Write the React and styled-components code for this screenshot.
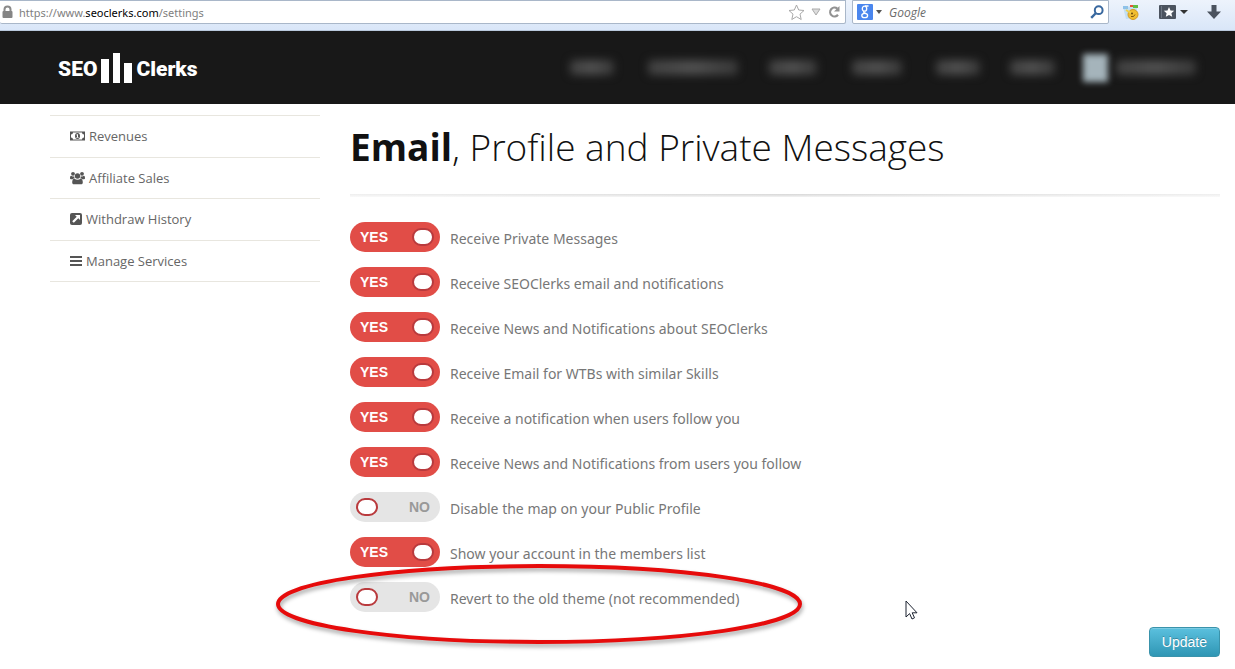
import React, { useState } from "react";
import styled, { createGlobalStyle } from "styled-components";

const GlobalStyle = createGlobalStyle`
  * { box-sizing: border-box; }
  body {
    margin: 0;
    background: #fff;
    color: #777;
    font-family: "Open Sans", sans-serif;
    font-size: 14px;
  }
`;

const Toolbar = styled.div`
  display: flex;
  align-items: flex-start;
  height: 31px;
  background: linear-gradient(#edf3fc, #d9e6f8);
  border-bottom: 1px solid #b9c8dc;
  font-family: "Noto Sans", sans-serif;
  font-size: 11px;
`;

const Field = styled.div`
  display: flex;
  align-items: center;
  height: 24px;
  background: #fff;
  border: 1px solid #a9b7c9;
  border-radius: 0 0 2px 2px;
`;

const AddressField = styled(Field)`
  flex: 1;
  gap: 6px;
  border-left: 0;
  padding: 0 4px 0 2px;
`;

const Address = styled.div`
  flex: 1;
  color: #808080;
  strong { color: #000; font-weight: 400; }
`;

const SearchField = styled(Field)`
  width: 257px;
  margin-left: 6px;
  padding: 0 4px;
  gap: 3px;
`;

const SearchInput = styled.input`
  flex: 1;
  min-width: 0;
  border: 0;
  outline: 0;
  padding: 0 4px;
  background: none;
  font: italic 12px "Open Sans", sans-serif;
  &::placeholder { color: #6b6b6b; opacity: 1; }
`;

const IconButton = styled.button`
  display: flex;
  align-items: center;
  gap: 4px;
  border: 0;
  padding: 0;
  background: none;
`;

const ToolbarActions = styled.div`
  display: flex;
  align-items: center;
  justify-content: space-between;
  width: 126px;
  height: 24px;
  padding: 0 14px 0 13px;
`;

const Header = styled.header`
  display: flex;
  align-items: center;
  justify-content: space-between;
  height: 73px;
  padding: 0 39px 0 58px;
  background: #181818;
`;

const Logo = styled.a`
  display: flex;
  align-items: flex-end;
  gap: 4px;
  color: #fff;
  font: 900 21px/28px Roboto, sans-serif;
  text-decoration: none;
`;

const Nav = styled.nav`
  display: flex;
  align-items: center;
`;

const Smudge = styled.span`
  width: ${(p) => p.$width}px;
  height: 15px;
  margin-left: ${(p) => p.$gap}px;
  border-radius: 4px;
  background: linear-gradient(90deg, #404040, #505050 50%, #383838);
  filter: blur(4px);
`;

const Avatar = styled.span`
  width: 25px;
  height: 28px;
  margin-left: 28px;
  background: #a5b4bb;
  filter: blur(3px);
`;

const Page = styled.div`
  display: flex;
  gap: 30px;
  padding: 11px 15px 12px 50px;
`;

const SideList = styled.ul`
  display: grid;
  grid-auto-rows: 1fr;
  align-self: flex-start;
  flex: 0 0 270px;
  min-height: 167px;
  margin: 0;
  padding: 0;
  list-style: none;
  border-top: 1px solid #e8e6df;
`;

const SideItem = styled.li`
  border-bottom: 1px solid #e8e6df;
`;

const SideLink = styled.a`
  display: flex;
  align-items: center;
  gap: 4px;
  height: 100%;
  padding: 0 20px;
  color: #666;
  font-size: 13px;
  text-decoration: none;
`;

const Main = styled.main`
  flex: 1;
  min-width: 0;
`;

const Title = styled.h1`
  margin: 0;
  padding: 5px 0 20px;
  color: #111;
  font-size: 37px;
  font-weight: 300;
  line-height: 54px;
  strong { font-weight: 700; }
`;

const Divider = styled.hr`
  height: 3px;
  margin: 0 0 25px;
  border: 0;
  background: linear-gradient(90deg, #eee, #d6d6d6 50%, #eee);
  mask-image: linear-gradient(#000, rgba(0, 0, 0, 0.3));
`;

const Options = styled.form`
  display: flex;
  flex-direction: column;
  gap: 15px;
`;

const Option = styled.label`
  position: relative;
  display: flex;
  align-items: center;
  gap: 10px;
  height: 30px;
`;

const OptionText = styled.span`
  padding-top: 3px;
  font-family: "Noto Sans", sans-serif;
  line-height: 20px;
`;

const Track = styled.span`
  position: relative;
  display: flex;
  flex-direction: ${(p) => (p.$on ? "row" : "row-reverse")};
  align-items: center;
  justify-content: space-between;
  width: 90px;
  height: 30px;
  padding: ${(p) => (p.$on ? "0 6px 0 10px" : "0 10px 0 6px")};
  border-radius: 15px;
  background: ${(p) => (p.$on ? "#e14d47" : "#e5e5e5")};
  color: ${(p) => (p.$on ? "#fff" : "#999")};
  font: 700 14px/30px "Liberation Sans", sans-serif;
`;

const Knob = styled.span`
  width: 22px;
  height: 18px;
  border: 2px solid #b93a3d;
  border-radius: 9px;
  background: #fff;
`;

const Check = styled.input`
  position: absolute;
  inset: 0;
  width: 100%;
  height: 100%;
  margin: 0;
  opacity: 0;
`;

const Ring = styled.svg`
  position: absolute;
  left: -76px;
  top: -20px;
  pointer-events: none;
  filter: drop-shadow(1px 3px 2px rgba(0, 0, 0, 0.35));
`;

const Pointer = styled.svg`
  position: absolute;
  left: 555px;
  top: 18px;
  pointer-events: none;
`;

const Footer = styled.div`
  display: flex;
  justify-content: flex-end;
`;

const UpdateButton = styled.button`
  height: 30px;
  padding: 0 12px;
  border: 1px solid #3a93ab;
  border-radius: 4px;
  background: linear-gradient(#5bc0de, #2f96b4);
  box-shadow: inset 0 1px 0 rgba(255, 255, 255, 0.2);
  color: #fff;
  font: 14px/20px "Liberation Sans", sans-serif;
  text-shadow: 0 -1px 0 rgba(0, 0, 0, 0.25);
`;

const MoneyIcon = () => (
  <svg width="15" height="14" viewBox="0 0 15 14" fill="#555">
    <path fillRule="evenodd" d="M0 2.500h15v9H0zM3 3.500A2 2 0 0 1 1 5.500v3a2 2 0 0 1 2 2h9a2 2 0 0 1 2-2v-3a2 2 0 0 1-2-2z" />
    <ellipse cx="7.500" cy="7" rx="2.500" ry="3" />
    <path fill="#fff" d="M7 5.200h1v2.800h.6v.7H6.400V8H7V6.200l-.6.2v-.7z" />
  </svg>
);

const UsersIcon = () => (
  <svg width="15" height="14" viewBox="0 0 15 14" fill="#555">
    <circle cx="3" cy="2.800" r="1.900" />
    <circle cx="12" cy="2.800" r="1.900" />
    <circle cx="7.500" cy="5" r="2.700" />
    <path d="M0 7.200C0 5.500.5 4.800 1.200 4.800c.8.700 2 .8 2.900.4.1 1 .3 1.500.7 2-.9 0-1.600.4-2.100 1H1.500C.6 8.200 0 7.900 0 7.200zM15 7.200c0-1.700-.5-2.400-1.200-2.400-.8.700-2 .8-2.900.4-.1 1-.3 1.500-.7 2 .9 0 1.600.4 2.100 1h1.200c.9 0 1.500-.3 1.500-1zM2.200 11.400c0-2.100.6-3.700 2.300-3.700 1.700 1.300 4.300 1.300 6 0 1.700 0 2.300 1.600 2.300 3.700 0 1.300-.8 1.900-2 1.900H4.200c-1.200 0-2-.6-2-1.900z" />
  </svg>
);

const ExternalIcon = () => (
  <svg width="12" height="12" viewBox="0 0 12 12">
    <rect width="12" height="12" rx="2" fill="#555" />
    <path d="M5 2h5v5L8.300 5.300 3.800 9.800 2.200 8.200l4.500-4.500z" fill="#fff" />
  </svg>
);

const BarsIcon = () => (
  <svg width="12" height="12" viewBox="0 0 12 12" fill="#555">
    <path d="M0 1h12v2H0zM0 5h12v2H0zM0 9h12v2H0z" />
  </svg>
);

const LockIcon = () => (
  <svg width="11" height="14" viewBox="0 0 11 14">
    <path d="M2.500 7V4.500a3 3 0 0 1 6 0V7" fill="none" stroke="#8a8a8a" strokeWidth="2" />
    <rect x="0.500" y="6" width="10" height="7" rx="1" fill="#858585" />
  </svg>
);

const StarIcon = () => (
  <svg width="17" height="17" viewBox="0 0 17 17" fill="#fff" stroke="#a9a9a9">
    <path d="M8.500 1l2.200 5 5.300.5-4 3.600 1.200 5.400-4.700-2.800-4.700 2.800L5 10.100 1 6.500 6.300 6z" />
  </svg>
);

const ReloadIcon = () => (
  <svg width="14" height="14" viewBox="0 0 14 14">
    <path d="M10.300 3.600A4.400 4.400 0 1 0 11 9.800" fill="none" stroke="#929292" strokeWidth="2.200" />
    <path d="M12.500 1v5.500H7z" fill="#929292" />
  </svg>
);

const GoogleIcon = () => (
  <svg width="16" height="16" viewBox="0 0 16 16">
    <rect width="16" height="16" rx="1" fill="#4a86ee" />
    <g fill="none" stroke="#fff" strokeWidth="1.300">
      <ellipse cx="7.500" cy="4.700" rx="2.200" ry="2.500" />
      <path d="M8 2h3.500M7 7.300c-1.200 1.300.5 1.200 2 2.200" />
      <ellipse cx="7.700" cy="11.500" rx="2.900" ry="2.200" />
    </g>
  </svg>
);

const Caret = ({ width = 7, color = "#555" }) => (
  <svg width={width} height="4" viewBox="0 0 8 4" preserveAspectRatio="none" fill={color}>
    <path d="M0 0h8L4 4z" />
  </svg>
);

const SearchIcon = () => (
  <svg width="14" height="14" viewBox="0 0 14 14" fill="none" stroke="#39689f">
    <circle cx="8.700" cy="5.200" r="3.900" strokeWidth="2" />
    <path d="M6 8l-4.800 4.800" strokeWidth="2.400" />
  </svg>
);

const sideLinks = [
  ["Revenues", MoneyIcon],
  ["Affiliate Sales", UsersIcon],
  ["Withdraw History", ExternalIcon],
  ["Manage Services", BarsIcon],
];

const navItems = [[44, 0], [90, 34], [48, 31], [50, 35], [44, 34], [45, 30]];

const initialOptions = [
  ["Receive Private Messages", true],
  ["Receive SEOClerks email and notifications", true],
  ["Receive News and Notifications about SEOClerks", true],
  ["Receive Email for WTBs with similar Skills", true],
  ["Receive a notification when users follow you", true],
  ["Receive News and Notifications from users you follow", true],
  ["Disable the map on your Public Profile", false],
  ["Show your account in the members list", true],
  ["Revert to the old theme (not recommended)", false],
];

function ToggleOption({ text, initial, children }) {
  const [on, setOn] = useState(initial);
  return (
    <Option>
      <Track $on={on}>
        {on ? "YES" : "NO"}
        <Knob />
        <Check type="checkbox" checked={on} onChange={() => setOn(!on)} />
      </Track>
      <OptionText>{text}</OptionText>
      {children}
    </Option>
  );
}

export default function App() {
  return (
    <>
      <GlobalStyle />
      <Toolbar>
        <AddressField>
          <LockIcon />
          <Address>https://www.<strong>seoclerks.com</strong>/settings</Address>
          <IconButton aria-label="Bookmark"><StarIcon /></IconButton>
          <IconButton aria-label="History">
            <svg width="10" height="8" viewBox="0 0 10 8" fill="#ddd" stroke="#aaa"><path d="M1 1h8L5 7z" /></svg>
          </IconButton>
          <IconButton aria-label="Reload"><ReloadIcon /></IconButton>
        </AddressField>
        <SearchField>
          <GoogleIcon />
          <Caret width={6} />
          <SearchInput aria-label="Search" placeholder="Google" />
          <IconButton aria-label="Go"><SearchIcon /></IconButton>
        </SearchField>
        <ToolbarActions>
          <IconButton aria-label="Add-on">
            <svg width="18" height="17" viewBox="0 0 18 17">
              <path d="M1 3l14-1v12l-11 1z" fill="#c3dff2" />
              <path d="M1 2h5v3H1z" fill="#8fc2e8" />
              <path d="M8 1h3v2H8z" fill="#e65236" />
              <path d="M11 1h5v3h-5z" fill="#62bd45" />
              <circle cx="11" cy="10.500" r="5" fill="#f1bd2f" stroke="#d59a22" />
              <path d="M4 6l5 3" stroke="#efcf4b" strokeWidth="2" />
              <circle cx="10" cy="9.500" r="1" fill="#6b4a10" />
              <path d="M9 12.500q3 1 4-2" fill="none" stroke="#85590f" />
            </svg>
          </IconButton>
          <IconButton aria-label="Bookmarks">
            <svg width="17" height="14" viewBox="0 0 17 14">
              <rect width="17" height="14" rx="1" fill="#4b535f" />
              <path d="M2.500 1v12" stroke="#6d7683" />
              <path d="M10 2l1.500 3.400 3.700.3-2.800 2.500.8 3.600-3.200-1.900-3.200 1.900.8-3.600-2.800-2.500 3.700-.3z" fill="#fff" />
            </svg>
            <Caret width={8} color="#333" />
          </IconButton>
          <IconButton aria-label="Downloads">
            <svg width="14" height="14" viewBox="0 0 14 14" fill="#4b535f"><path d="M4.500 0h5v6.500H14L7 14 0 6.500h4.500z" /></svg>
          </IconButton>
        </ToolbarActions>
      </Toolbar>
      <Header>
        <Logo href="#">
          SEO
          <svg width="31" height="30" viewBox="0 0 31 30" fill="#fff">
            <path d="M0 6h8v24H0zM12 0h7v30h-7zM23 10h8v20h-8z" />
          </svg>
          Clerks
        </Logo>
        <Nav>
          {navItems.map(([width, gap], i) => <Smudge key={i} $width={width} $gap={gap} />)}
          <Avatar />
          <Smudge $width={80} $gap={8} />
        </Nav>
      </Header>
      <Page>
        <SideList>
          {sideLinks.map(([text, Icon]) => (
            <SideItem key={text}>
              <SideLink href="#"><Icon />{text}</SideLink>
            </SideItem>
          ))}
        </SideList>
        <Main>
          <Title><strong>Email</strong>, Profile and Private Messages</Title>
          <Divider />
          <Options onSubmit={(e) => e.preventDefault()}>
            {initialOptions.map(([text, on], i) => (
              <ToggleOption key={text} text={text} initial={on}>
                {i === initialOptions.length - 1 && (
                  <>
                    <Ring width="532" height="86" viewBox="0 0 532 86" aria-hidden="true">
                      <ellipse cx="265" cy="42" rx="261" ry="38" fill="none" stroke="#e60b0b" strokeWidth="4" />
                    </Ring>
                    <Pointer width="13" height="20" viewBox="0 0 13 20" aria-hidden="true">
                      <path d="M1 1v16l3.600-3.400L7 19l2.500-1.200-2.300-5H12z" fill="#fff" stroke="#1c2230" />
                    </Pointer>
                  </>
                )}
              </ToggleOption>
            ))}
            <Footer>
              <UpdateButton type="submit">Update</UpdateButton>
            </Footer>
          </Options>
        </Main>
      </Page>
    </>
  );
}
